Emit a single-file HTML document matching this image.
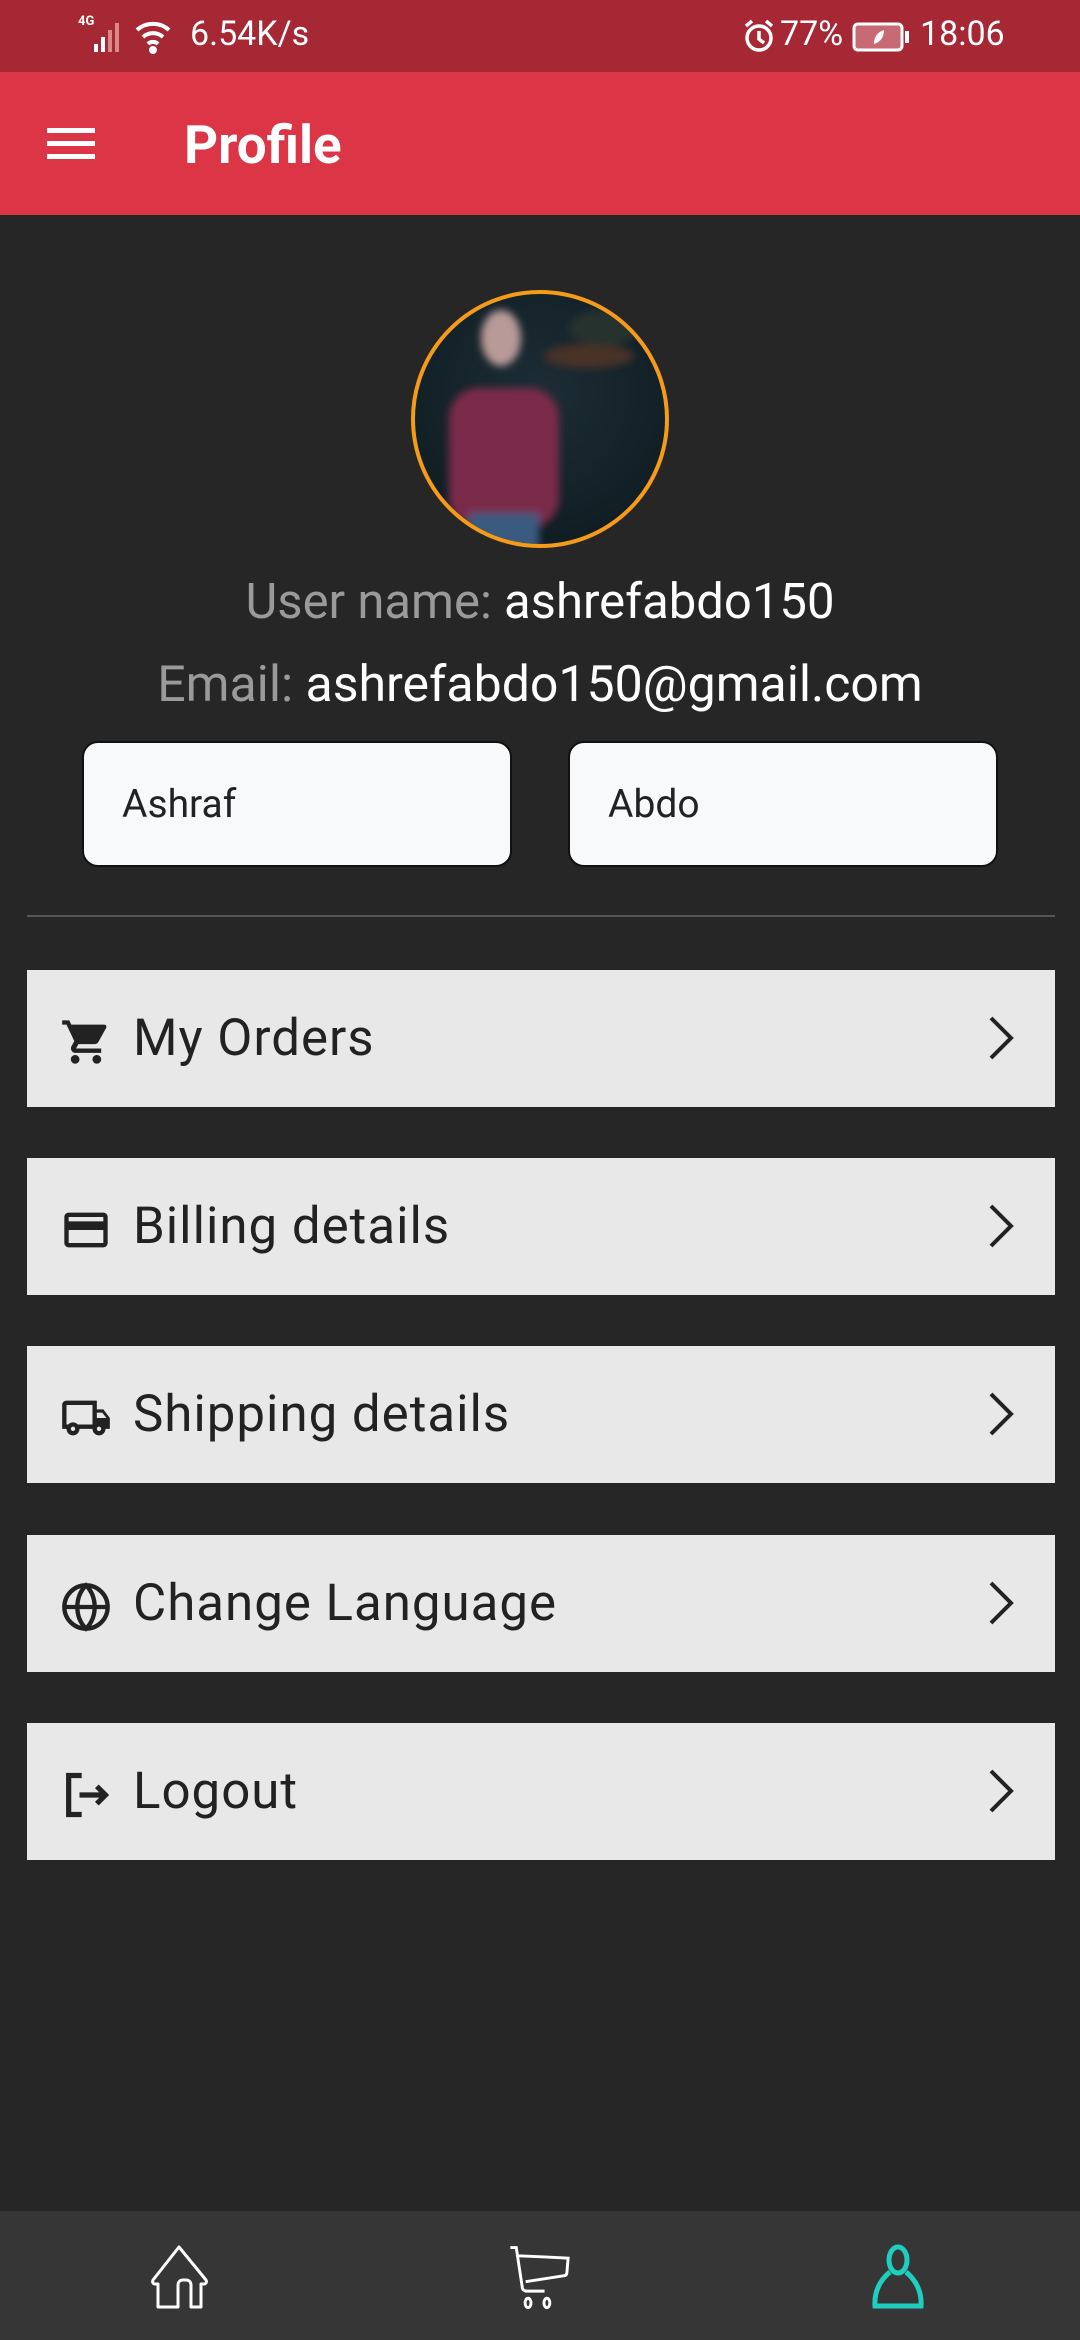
<!DOCTYPE html>
<html><head><meta charset="utf-8"><style>
*{margin:0;padding:0;box-sizing:border-box}
body{width:1080px;height:2340px;background:#262626;font-family:"Roboto","Liberation Sans",sans-serif;position:relative;overflow:hidden}
.abs{position:absolute}
.status{left:0;top:0;width:1080px;height:72px;background:#a52834;color:#fff;font-size:32px}
.bar{left:0;top:72px;width:1080px;height:143px;background:#db3546}
.item{position:absolute;left:27px;width:1028px;height:137px;background:#e8e8e8}
.item .t{position:absolute;left:106px;top:0;line-height:137px;font-size:51px;color:#222;letter-spacing:1px}
.item svg.i{position:absolute;left:33px;top:46px}
.item svg.c{position:absolute;left:958px;top:46px}
.inp{position:absolute;top:741px;width:430px;height:126px;background:#f8f9fb;border:2px solid #111;border-radius:16px;font-size:39px;color:#222;line-height:122px;padding-left:38px}
</style></head><body>
<div class="abs status">
 <div class="abs" style="left:78px;top:14px;font-size:13px;font-weight:bold">4G</div>
 <svg class="abs" style="left:92px;top:20px" width="36" height="34"><rect x="2" y="24" width="4" height="8" fill="#fff"/><rect x="9" y="17" width="4" height="15" fill="#fff"/><rect x="16" y="10" width="4" height="22" fill="#d88"/><rect x="23" y="3" width="4" height="29" fill="#d88"/></svg>
 <svg class="abs" style="left:134px;top:18px" width="40" height="36" fill="none" stroke="#fff" stroke-width="4"><path d="M3 12a24 24 0 0 1 32 0M9 19a15 15 0 0 1 20 0M14 26a7 7 0 0 1 10 0"/><circle cx="19" cy="32" r="2" fill="#fff"/></svg>
 <div class="abs" style="left:190px;top:14px;font-size:34px">6.54K/s</div>
 <svg class="abs" style="left:742px;top:18px" width="34" height="36" fill="none" stroke="#fff" stroke-width="3.5"><circle cx="17" cy="20" r="12"/><path d="M17 13v8l5 4M4 8l6-5M30 8l-6-5"/></svg>
 <div class="abs" style="left:780px;top:14px;font-size:34px">77%</div>
 <svg class="abs" style="left:852px;top:22px" width="58" height="30"><rect x="2" y="2" width="48" height="26" rx="4" fill="#c86a74" stroke="#fff" stroke-width="3"/><rect x="53" y="9" width="4" height="12" fill="#fff"/><path d="M22 22c0-8 4-12 10-14 0 8-4 12-10 14z" fill="#fff"/></svg>
 <div class="abs" style="left:920px;top:14px;font-size:34px">18:06</div>
</div>
<div class="abs bar">
 <svg class="abs" style="left:47px;top:54px" width="48" height="36"><rect x="0" y="2" width="48" height="5" fill="#fff"/><rect x="0" y="15" width="48" height="5" fill="#fff"/><rect x="0" y="28" width="48" height="5" fill="#fff"/></svg>
 <div class="abs" style="left:184px;top:42px;font-size:53px;font-weight:bold;color:#fff">Profile</div>
</div>
<svg class="abs" style="left:409px;top:288px" width="262" height="262">
 <defs><clipPath id="cp"><circle cx="131" cy="131" r="125"/></clipPath>
 <filter id="bl"><feGaussianBlur stdDeviation="4"/></filter>
 <radialGradient id="bg" cx="0.5" cy="0.4" r="0.7"><stop offset="0" stop-color="#1d2d35"/><stop offset="1" stop-color="#0d1a20"/></radialGradient></defs>
 <g clip-path="url(#cp)">
  <rect width="262" height="262" fill="url(#bg)"/>
  <g filter="url(#bl)">
  <ellipse cx="180" cy="68" rx="45" ry="12" fill="#4a3026"/>
  <ellipse cx="195" cy="40" rx="35" ry="18" fill="#26302f"/>
  <ellipse cx="92" cy="50" rx="20" ry="28" fill="#b89a98"/>
  <rect x="40" y="100" width="110" height="140" rx="30" fill="#7a2a4a"/>
  <rect x="60" y="225" width="70" height="40" fill="#3b5a80"/>
  </g>
 </g>
 <circle cx="131" cy="131" r="127" fill="none" stroke="#f59b1a" stroke-width="4"/>
</svg>
<div class="abs" style="left:0;top:573px;width:1080px;text-align:center;font-size:49px;color:#9a9a9a">User name: <span style="color:#fff">ashrefabdo150</span></div>
<div class="abs" style="left:0;top:656px;width:1080px;text-align:center;font-size:50px;color:#9a9a9a">Email: <span style="color:#fff">ashrefabdo150@gmail.com</span></div>
<div class="inp" style="left:82px">Ashraf</div>
<div class="inp" style="left:568px">Abdo</div>
<div class="abs" style="left:27px;top:915px;width:1028px;height:2px;background:#555"></div>

<div class="item" style="top:970px">
 <svg class="i" width="52" height="52" viewBox="0 0 24 24" fill="#222"><path d="M7 18c-1.1 0-2 .9-2 2s.9 2 2 2 2-.9 2-2-.9-2-2-2zM1 2v2h2l3.6 7.6-1.35 2.4C4.6 15.4 5.6 17 7 17h12v-2H7.4l1.1-2h7.450c.75 0 1.4-.4 1.75-1l3.6-6.5C21.7 4.8 21.2 4 20.4 4H5.2l-.9-2H1zm16 16c-1.1 0-2 .9-2 2s.9 2 2 2 2-.9 2-2-.9-2-2-2z"/></svg>
 <div class="t">My Orders</div>
 <svg class="c" width="32" height="44" fill="none" stroke="#222" stroke-width="4"><path d="M6 2l20 20L6 42"/></svg>
</div>
<div class="item" style="top:1158px">
 <svg class="i" width="52" height="52" viewBox="0 0 24 24" fill="#222"><path d="M20 4H4c-1.1 0-2 .9-2 2v12c0 1.1.9 2 2 2h16c1.1 0 2-.9 2-2V6c0-1.1-.9-2-2-2zm0 14H4v-6h16v6zm0-10H4V6h16v2z"/></svg>
 <div class="t">Billing details</div>
 <svg class="c" width="32" height="44" fill="none" stroke="#222" stroke-width="4"><path d="M6 2l20 20L6 42"/></svg>
</div>
<div class="item" style="top:1346px">
 <svg class="i" width="52" height="52" viewBox="0 0 24 24" fill="#222"><path d="M20 8h-3V4H3c-1.1 0-2 .9-2 2v11h2c0 1.660 1.34 3 3 3s3-1.34 3-3h6c0 1.66 1.34 3 3 3s3-1.34 3-3h2v-5l-3-4zm-.5 1.5l1.96 2.5H17V9.5h2.5zM6 18c-.55 0-1-.45-1-1s.45-1 1-1 1 .45 1 1-.45 1-1 1zm2.22-3c-.55-.61-1.33-1-2.22-1s-1.67.39-2.22 1H3V6h12v9H8.22zM18 18c-.55 0-1-.45-1-1s.45-1 1-1 1 .45 1 1-.45 1-1 1z"/></svg>
 <div class="t">Shipping details</div>
 <svg class="c" width="32" height="44" fill="none" stroke="#222" stroke-width="4"><path d="M6 2l20 20L6 42"/></svg>
</div>
<div class="item" style="top:1535px">
 <svg class="i" width="52" height="52" viewBox="0 0 24 24" fill="none" stroke="#222" stroke-width="2"><circle cx="12" cy="12" r="10"/><path d="M2 12h20M12 2c3 3 4 6.5 4 10s-1 7-4 10c-3-3-4-6.5-4-10s1-7 4-10z"/></svg>
 <div class="t">Change Language</div>
 <svg class="c" width="32" height="44" fill="none" stroke="#222" stroke-width="4"><path d="M6 2l20 20L6 42"/></svg>
</div>
<div class="item" style="top:1723px">
 <svg class="i" width="52" height="52" viewBox="0 0 24 24" fill="none" stroke="#222" stroke-width="2.4"><path d="M10 3H4v18h6M9 12h12M17 8l4 4-4 4"/></svg>
 <div class="t">Logout</div>
 <svg class="c" width="32" height="44" fill="none" stroke="#222" stroke-width="4"><path d="M6 2l20 20L6 42"/></svg>
</div>

<div class="abs" style="left:0;top:2211px;width:1080px;height:129px;background:#363636"></div>
<svg class="abs" style="left:148px;top:2244px" width="64" height="66" fill="none" stroke="#fff" stroke-width="3" stroke-linejoin="round"><path d="M10 63V40H7c-2 0-3-2-2-4L31 3l27 33c1 2 0 4-2 4h-3v23H43V41c0-3-2-5-5-5h-3c-3 0-5 2-5 5v22Z"/></svg>
<svg class="abs" style="left:508px;top:2244px" width="66" height="66" viewBox="0 0 56 56" fill="none" stroke="#fff" stroke-width="2.5"><path d="M2 3h5l5 33c0 3 2 4 4 4h15M9 10l22 1 20 1-1 12c0 2-1 3-3 3l-32 5"/><ellipse cx="17" cy="50" rx="2.5" ry="4"/><ellipse cx="33" cy="50" rx="2.5" ry="4"/></svg>
<svg class="abs" style="left:868px;top:2244px" width="60" height="66" fill="none" stroke="#1ecfbf" stroke-width="5"><ellipse cx="30" cy="16" rx="9" ry="13"/><path d="M22 28C12 36 6 48 7 62h46c1-14-5-26-15-34"/></svg>
</body></html>
